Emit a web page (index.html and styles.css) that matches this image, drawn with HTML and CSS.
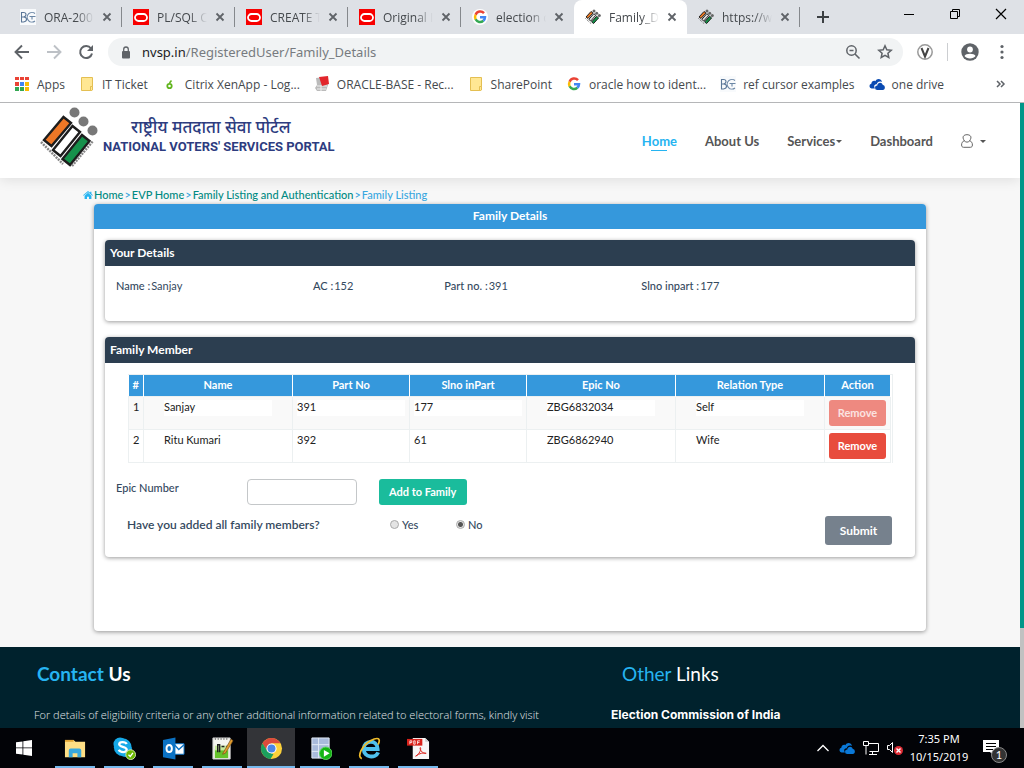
FILE: index.html
```html
<!DOCTYPE html>
<html lang="en">
<head>
<meta charset="utf-8">
<title>Family_Details</title>
<link rel="stylesheet" href="styles.css">
</head>
<body>
<svg class="defs" aria-hidden="true">
  <symbol id="i-bc" viewBox="0 0 16 16"><rect width="16" height="16" fill="#f8fafc"/><path d="M1.500 3v10M1 3.500h2.500q2.500 0 2.500 2T3.500 8H2M3.500 8q3 0 3 2.300T3.500 13H1" fill="none" stroke="#5b7798" stroke-width="1.100"/><path d="M15 4.500A4.800 4.800 0 1 0 15 12M9.500 7.500h6M12 7.500v3" fill="none" stroke="#6b86a5" stroke-width="1.100"/></symbol>
  <symbol id="i-oracle" viewBox="0 0 16 16"><rect width="16" height="16" fill="#f80000"/><rect x="2" y="5" width="12" height="7" rx="3.500" fill="none" stroke="#fff" stroke-width="1.800"/></symbol>
  <symbol id="i-google" viewBox="0 0 16 16"><circle cx="8" cy="8" r="8" fill="#fff"/><g fill="none" stroke-width="2.500"><path d="M12 4.200A5 5 0 0 0 3.600 5.700" stroke="#ea4335"/><path d="M3.600 5.700a5 5 0 0 0 0 4.600" stroke="#fbbc05"/><path d="M3.600 10.300a5 5 0 0 0 7.700 1.500" stroke="#34a853"/><path d="M11.300 11.800A5 5 0 0 0 13 8.200H8" stroke="#4285f4"/></g></symbol>
  <symbol id="i-eci" viewBox="0 0 16 16"><g fill="#666"><circle cx="9" cy="2" r="1.500"/><circle cx="11.700" cy="4.200" r="1.500"/><circle cx="14.300" cy="6.500" r="1.500"/></g><g stroke="#222" stroke-width="1"><path d="m6 2.500 2 1.600-5 5.300L1 8z" fill="#e87722"/><path d="m8.800 4.700 2 1.600-5 5.700-2-1.600z" fill="#ddd"/><path d="m11.600 7.300 2 1.600-5 5.600-2-1.600z" fill="#129347"/></g><path d="m.5 9.500 6 5.500" stroke="#555" stroke-dasharray="1 1"/></symbol>
  <symbol id="i-close" viewBox="0 0 10 10"><path d="m1.500 1.500 7 7m0-7-7 7" stroke="#5f6368" stroke-width="1.800"/></symbol>
  <symbol id="i-note" viewBox="0 0 14 16"><path d="M1.500 1.500h11v9h-1v4h-10z" fill="#ffe793" stroke="#e4bf52"/><path d="M10.500 14.500v-4h2v3.500l-1 .5z" fill="#ffe793" stroke="#e4bf52"/></symbol>
  <symbol id="i-cloud" viewBox="0 0 16 12"><path d="M6 10.500H2.500a2.400 2.400 0 0 1-.2-4.700C2.500 3 5 2.300 6.300 3.200 8-.4 12.500.6 13 4c-3-1.300-4.700.3-5.300 2.200C5 6 4.600 8.700 6 10.500z"/><path d="M8.300 12a2.300 2.300 0 0 1 0-4.600c.2-3.200 4.700-3.700 5.500-.5 2.800.2 2.700 5.100 0 5.100z"/></symbol>
</svg>

<header class="browser">
  <div class="tabs">
    <div class="tab"><svg class="fav"><use href="#i-bc"/></svg><span class="tab-title">ORA-200</span><button class="close" aria-label="Close tab"><svg><use href="#i-close"/></svg></button></div>
    <div class="tab"><svg class="fav"><use href="#i-oracle"/></svg><span class="tab-title">PL/SQL C</span><button class="close" aria-label="Close tab"><svg><use href="#i-close"/></svg></button></div>
    <div class="tab"><svg class="fav"><use href="#i-oracle"/></svg><span class="tab-title">CREATE T</span><button class="close" aria-label="Close tab"><svg><use href="#i-close"/></svg></button></div>
    <div class="tab"><svg class="fav"><use href="#i-oracle"/></svg><span class="tab-title">Original I</span><button class="close" aria-label="Close tab"><svg><use href="#i-close"/></svg></button></div>
    <div class="tab last"><svg class="fav"><use href="#i-google"/></svg><span class="tab-title">election c</span><button class="close" aria-label="Close tab"><svg><use href="#i-close"/></svg></button></div>
    <div class="tab active"><svg class="fav"><use href="#i-eci"/></svg><span class="tab-title">Family_D</span><button class="close" aria-label="Close tab"><svg><use href="#i-close"/></svg></button></div>
    <div class="tab"><svg class="fav"><use href="#i-eci"/></svg><span class="tab-title">https://w</span><button class="close" aria-label="Close tab"><svg><use href="#i-close"/></svg></button></div>
    <button class="new-tab" aria-label="New tab"><svg viewBox="0 0 12 12"><path d="M6 0v12M0 6h12" stroke="#3c4043" stroke-width="2"/></svg></button>
    <div class="window-buttons">
      <button aria-label="Minimize"><svg viewBox="0 0 12 12"><path d="M1 6.500h10" stroke="#000"/></svg></button>
      <button aria-label="Restore"><svg viewBox="0 0 12 12"><path d="M1.500 3.500h7v7h-7zM3.500 3.500v-2h7v7h-2" fill="none" stroke="#000"/></svg></button>
      <button aria-label="Close"><svg viewBox="0 0 12 12"><path d="m1 1 10 10m0-10L1 11" stroke="#000" stroke-width="1.200"/></svg></button>
    </div>
  </div>
  <div class="toolbar">
    <button aria-label="Back"><svg viewBox="0 0 16 16"><path d="M15 8H2M8 1.500 1.500 8 8 14.500" fill="none" stroke="#5f6368" stroke-width="1.900"/></svg></button>
    <button aria-label="Forward"><svg viewBox="0 0 16 16"><path d="M1 8h13M8 1.500 14.500 8 8 14.500" fill="none" stroke="#bdc1c6" stroke-width="1.900"/></svg></button>
    <button aria-label="Reload"><svg viewBox="0 0 16 16"><path d="M13 4.500A6 6 0 1 0 14 9.500" fill="none" stroke="#5f6368" stroke-width="2"/><path d="M15 1v6H9z" fill="#5f6368"/></svg></button>
    <div class="address">
      <svg class="lock" viewBox="0 0 10 13"><rect x="1" y="5" width="8" height="7.500" rx="1" fill="#5f6368"/><path d="M2.700 5.500V3.300a2.300 2.300 0 0 1 4.600 0v2.200" fill="none" stroke="#5f6368" stroke-width="1.300"/></svg>
      <span class="url">nvsp.in<span>/RegisteredUser/Family_Details</span></span>
      <button aria-label="Zoom"><svg viewBox="0 0 16 16"><circle cx="6.500" cy="6.500" r="4.700" fill="none" stroke="#5f6368" stroke-width="1.500"/><path d="m10 10 4.500 4.500M4.500 6.500h4" stroke="#5f6368" stroke-width="1.600"/></svg></button>
      <button aria-label="Bookmark"><svg viewBox="0 0 16 16"><path d="m8 1.800 1.800 4 4.400.5-3.300 2.900.9 4.300L8 11.300l-3.800 2.200.9-4.300-3.300-2.900 4.400-.5z" fill="none" stroke="#5f6368" stroke-width="1.500"/></svg></button>
    </div>
    <button class="ext" aria-label="Extension"><svg viewBox="0 0 16 16"><circle cx="8" cy="8" r="7.200" fill="#fff" stroke="#999" stroke-width="1.500"/><path d="m4.500 4 3.500 8.500L11.500 4" fill="none" stroke="#444" stroke-width="2"/></svg></button>
    <button class="profile" aria-label="Profile"><svg viewBox="0 0 18 18"><circle cx="9" cy="9" r="8.700" fill="#5f6368"/><circle cx="9" cy="6.500" r="2.900" fill="#fff"/><path d="M3.500 13c1-3 10-3 11 0-2 3.300-9 3.300-11 0z" fill="#fff"/></svg></button>
    <button class="menu" aria-label="Menu"><svg viewBox="0 0 16 16" fill="#5f6368"><circle cx="8" cy="2.500" r="1.600"/><circle cx="8" cy="8" r="1.600"/><circle cx="8" cy="13.500" r="1.600"/></svg></button>
  </div>
  <nav class="bookmarks" aria-label="Bookmarks">
    <a href="#"><svg viewBox="0 0 16 16"><path d="M1 1h4v3H1zM6 1h4v3H6zM11 1h4v3h-4zM1 6h4v4H1z" fill="#ea4335"/><path d="M6 6h4v4H6z" fill="#4285f4"/><path d="M11 6h4v4h-4zM11 11h4v4h-4z" fill="#fbbc05"/><path d="M1 11h4v4H1zM6 11h4v4H6z" fill="#34a853"/></svg>Apps</a>
    <a href="#"><svg><use href="#i-note"/></svg>IT Ticket</a>
    <a href="#"><svg viewBox="0 0 16 16"><circle cx="7.500" cy="10" r="2.200" fill="none" stroke="#62b51e" stroke-width="1.800"/><path d="m7.500 7 2-2.500" stroke="#62b51e" stroke-width="1.600"/></svg>Citrix XenApp - Log...</a>
    <a href="#"><svg viewBox="0 0 16 16"><path d="m2 2 9-1 3 8-2 6H3L1 12l2-3z" fill="#bbb"/><path d="M3 10h10M3 13h9M7 9v6" stroke="#eee"/><path d="m5 1 9-1 1 8-7 2z" fill="#e2262c"/></svg>ORACLE-BASE - Rec...</a>
    <a href="#"><svg><use href="#i-note"/></svg>SharePoint</a>
    <a href="#"><svg><use href="#i-google"/></svg>oracle how to ident...</a>
    <a href="#"><svg><use href="#i-bc"/></svg>ref cursor examples</a>
    <a href="#" class="bm-drive"><svg fill="#094ab2"><use href="#i-cloud"/></svg>one drive</a>
    <button class="more" aria-label="More bookmarks"><svg viewBox="0 0 10 8"><path d="m1 1 3 3-3 3m4-6 3 3-3 3" fill="none" stroke="#5f6368" stroke-width="1.500"/></svg></button>
  </nav>
</header>

<div class="viewport">
  <div class="page">
    <header class="site-header">
      <a href="#" class="brand">
        <svg viewBox="0 0 58 60"><g fill="#787878"><circle cx="34.500" cy="5.500" r="5"/><circle cx="43.500" cy="14.500" r="5"/><circle cx="52.500" cy="23.500" r="5"/></g><g stroke="#1d1d1d" stroke-width="2.400"><path d="m23.500 10 7.500 6L11.500 39 4 33z" fill="#ee7726"/><path d="m32.500 19 7.500 6-19.500 24-7.500-6z" fill="#fff"/><path d="m42 28 7.500 6L30 58l-7.500-6z" fill="#16914b"/></g><path d="M1 35 23 57M32 59 53 34" stroke="#888" stroke-width="2.500" stroke-dasharray="2 1"/></svg>
        <span class="brand-text"><span lang="hi" class="hindi">राष्ट्रीय मतदाता सेवा पोर्टल</span><span class="english">NATIONAL VOTERS' SERVICES PORTAL</span></span>
      </a>
      <nav class="site-nav" aria-label="Main">
        <a href="#" class="current">Home</a>
        <a href="#">About Us</a>
        <a href="#" class="caret">Services</a>
        <a href="#">Dashboard</a>
        <a href="#" class="caret user" aria-label="Account"><svg viewBox="0 0 12 14"><path d="M3.500 7C.3 2.500 3 .7 6 .7S11.700 2.500 8.500 7C10.500 7 11.500 9 11.400 11c0 1.500-.7 2.300-2 2.300H2.600c-1.300 0-2-.8-2-2.300C.5 9 1.500 7 3.500 7c1.500 1.500 3.500 1.500 5 0" fill="none" stroke="#666"/></svg></a>
      </nav>
    </header>

    <nav class="crumbs" aria-label="Breadcrumb">
      <svg viewBox="0 0 11 10" fill="#26b4f1"><path d="M5.500 2 1.700 5.200V9h2.700V6.500h2.200V9h2.700V5.200zM5.500 0 0 4.600l.6.700 4.900-4 4.900 4 .6-.7L9.300 3V.8H7.900v1.100z"/></svg>
      <a href="#">Home</a> &gt; <a href="#">EVP Home</a> &gt; <a href="#">Family Listing and Authentication</a> &gt; <span>Family Listing</span>
    </nav>

    <main class="card">
      <h1>Family Details</h1>
      <section class="panel details">
        <h2>Your Details</h2>
        <div class="grid">
          <div class="span3"><b>Name :</b><span>Sanjay</span></div>
          <div class="span2"><b>AC :</b><span>152</span></div>
          <div class="span3"><b>Part no. :</b><span>391</span></div>
          <div class="span4"><b>Slno inpart :</b><span>177</span></div>
        </div>
      </section>
      <section class="panel members">
        <h2>Family Member</h2>
        <div class="table-wrap">
          <table>
            <colgroup><col class="c-num"><col class="c-wide"><col class="c-mid"><col class="c-mid"><col class="c-wide"><col class="c-wide"><col class="c-act"></colgroup>
            <thead><tr><th>#</th><th>Name</th><th>Part No</th><th>Slno inPart</th><th>Epic No</th><th>Relation Type</th><th>Action</th></tr></thead>
            <tbody>
              <tr><td>1</td><td class="inset"><span>Sanjay</span></td><td><span>391</span></td><td><span>177</span></td><td class="inset"><span>ZBG6832034</span></td><td class="inset"><span>Self</span></td><td><button class="btn remove" disabled>Remove</button></td></tr>
              <tr><td>2</td><td class="inset"><span>Ritu Kumari</span></td><td><span>392</span></td><td><span>61</span></td><td class="inset"><span>ZBG6862940</span></td><td class="inset"><span>Wife</span></td><td><button class="btn remove">Remove</button></td></tr>
            </tbody>
          </table>
        </div>
        <form class="grid epic">
          <label class="span2" for="epic">Epic Number</label>
          <div class="span2"><input type="text" id="epic"></div>
          <div class="span4"><button type="button" class="btn add">Add to Family</button></div>
        </form>
        <div class="grid confirm">
          <span class="question">Have you added all family members?</span>
          <label class="choice"><input type="radio" name="all" value="yes">Yes</label>
          <label class="choice"><input type="radio" name="all" value="no" checked>No</label>
          <div class="submit-cell"><button type="button" class="btn submit">Submit</button></div>
        </div>
      </section>
    </main>

    <footer class="site-footer">
      <section><h3><strong><em>Contact</em> Us</strong></h3><p>For details of eligibility criteria or any other additional information related to electoral forms, kindly visit</p></section>
      <section><h3><em>Other</em> Links</h3><p><a href="#">Election Commission of India</a></p></section>
    </footer>
  </div>
  <div class="scrollbar"><div class="thumb"></div></div>
</div>

<footer class="taskbar">
  <button class="start" aria-label="Start"><svg viewBox="0 0 16 16" fill="#fff"><path d="M0 2.300 6.500 1.400v6.100H0zM7.300 1.300 16 0v7.500H7.300zM0 8.300h6.500v6.300L0 13.700zM7.300 8.300H16V16l-8.700-1.300z"/></svg></button>
  <div class="apps">
    <button aria-label="File Explorer"><svg viewBox="0 0 24 24"><path d="M1 3h9l2 2h10v16H1z" fill="#ffdf85"/><path d="M1 3h9v2H1z" fill="#e3a735"/><path d="M5 21v-7q0-2 2-2h9q2 0 2 2v7h-4v-4H9v4z" fill="#39a9df"/></svg></button>
    <button aria-label="Skype"><svg viewBox="0 0 26 26"><circle cx="8" cy="8" r="7.500" fill="#16a9e8"/><circle cx="14" cy="15" r="7.500" fill="#16a9e8"/><circle cx="11" cy="11.500" r="10" fill="#16a9e8"/><path d="M15.500 8C14 5 7 4.800 7 8.300s8.500 2 8.500 6S8 17.500 6.500 14.500" fill="none" stroke="#fff" stroke-width="2.600"/><circle cx="20" cy="20" r="5.500" fill="#6bb700" stroke="#d6edb5"/><path d="m17.500 20 2 2 3-4" fill="none" stroke="#fff" stroke-width="1.500"/></svg></button>
    <button aria-label="Outlook"><svg viewBox="0 0 24 24"><path d="M13 7h10v11H13z" fill="#fff" stroke="#0b72c4"/><path d="m13 8 4.500 5L23 8" fill="none" stroke="#0b72c4" stroke-width="1.500"/><path d="m1 3 13-2.500v23L1 21z" fill="#0b72c4"/><ellipse cx="7.500" cy="12" rx="2.800" ry="3.700" fill="none" stroke="#fff" stroke-width="2"/></svg></button>
    <button aria-label="Notepad++"><svg viewBox="0 0 24 24"><path d="M2 1h18v22H2z" fill="#f5f5ef" stroke="#ccc"/><path d="M4 13h14v9H4z" fill="#65c32a"/><path d="M4 9h14v5H4z" fill="#c6e99a"/><path d="M7 16V8h2v8M11 10h3m2 0h2" fill="none" stroke="#222" stroke-width="1.500"/><path d="m13 16 8-14 2 2-8 13-3 1z" fill="#e29b2d" stroke="#76501a" stroke-width=".7"/><path d="M4 2h13" stroke="#777" stroke-width="2" stroke-dasharray="1 2"/></svg></button>
    <button class="running" aria-label="Chrome"><svg viewBox="0 0 24 24"><circle cx="12" cy="12" r="11" fill="#fbd13b"/><path d="M2.500 6.500a11 11 0 0 1 19 0H12L7.500 15z" fill="#dc4b3d"/><path d="M2.500 6.500 8 15l6 3-3 5A11 11 0 0 1 2.500 6.500z" fill="#1ba05e"/><circle cx="12" cy="12" r="5.300" fill="#fff"/><circle cx="12" cy="12" r="4.200" fill="#4a86e8"/></svg></button>
    <button aria-label="SQL Developer"><svg viewBox="0 0 24 24"><path d="M3 1h18v21H3z" fill="#a9bbdc" stroke="#e4ebf7"/><path d="M3 8h18M3 15h18M10 1v21" stroke="#e4ebf7"/><circle cx="17.500" cy="17" r="6.500" fill="#14b514" stroke="#5ed65e"/><path d="m15.500 13.500 6 3.500-6 3.500z" fill="#fff"/></svg></button>
    <button aria-label="Internet Explorer"><svg viewBox="0 0 24 24"><path d="M21 16c-2.500 6.500-15 6-15-3.500S20 2 20.500 12.500H7" fill="none" stroke="#4fc1ee" stroke-width="4"/><path d="M4 22.500C-1.500 21 4 9 13 4c8-4.500 11-2.500 8 4" fill="none" stroke="#f0bd2b" stroke-width="1.800"/></svg></button>
    <button aria-label="PDF reader"><svg viewBox="0 0 24 24"><path d="M6 1h13l4 4v18H6z" fill="#f6f6f6"/><path d="M19 1v4h4" fill="#ccc"/><path d="M0 2h16v7H0z" fill="#d9221b"/><path d="M3 7.500V4h2v1.800H3M7 4v3.500h1.500V4zM11 7.500V4h2.500M11 5.700h2" fill="none" stroke="#fff" stroke-width=".8"/><path d="M9 20c4-2 6-7 5-9-1.500 1 2 7 6 6-3-1-7 0-11 3z" fill="none" stroke="#d9221b"/></svg></button>
  </div>
  <div class="tray">
    <svg class="chev" viewBox="0 0 12 8"><path d="m.5 7 5.500-5.500L11.500 7" fill="none" stroke="#fff" stroke-width="1.300"/></svg>
    <svg class="onedrive" fill="#0a78d7"><use href="#i-cloud"/></svg>
    <svg class="net" viewBox="0 0 16 14"><path d="M5.500 2.500h10v8h-9M9.500 11v2M6 13.500h8M.5.500h5v4h-5zM3 4.500v9" fill="none" stroke="#fff"/></svg>
    <svg class="sound" viewBox="0 0 16 14"><path d="M.5 4.500h2l3-3v10l-3-3h-2z" fill="none" stroke="#fff"/><circle cx="11.500" cy="9.500" r="4.500" fill="#dd2c34"/><path d="m9.500 7.500 4 4m0-4-4 4" stroke="#fff" stroke-width="1.400"/></svg>
    <time class="clock"><span>7:35 PM</span><span>10/15/2019</span></time>
    <button class="notify" aria-label="Notifications"><svg viewBox="0 0 16 16"><path d="M0 0h16v12h-5v4l-4-4H0z" fill="#fff"/><path d="M3 3.500h10M3 6.500h10M3 9.500h7" stroke="#000"/></svg><span class="badge">1</span></button>
  </div>
</footer>
</body>
</html>
```

FILE: styles.css
```css
* { box-sizing: border-box; }
body { margin: 0; height: 100vh; display: flex; flex-direction: column; overflow: hidden; font-family: Lato, "Liberation Sans", sans-serif; font-size: 11px; }
button { border: 0; background: none; padding: 0; font-family: inherit; display: flex; align-items: center; justify-content: center; flex: none; }
a { text-decoration: none; color: inherit; }
svg { flex: none; display: block; }
h1, h2, h3, p { margin: 0; }
.defs { position: absolute; width: 0; height: 0; }

/* Browser frame */
.browser { flex: none; background: #fff; border-bottom: 1px solid #b5b6b8; font-family: "Open Sans", "Noto Sans", sans-serif; font-size: 12px; color: #45494d; }
.tabs { height: 34px; background: #dee1e6; display: flex; align-items: stretch; padding-left: 9px; }
.tab { width: 113px; display: flex; align-items: center; gap: 8px; padding: 0 10px 0 11px; position: relative; }
.tab::after { content: ""; position: absolute; right: 0; top: 7px; width: 1px; height: 20px; background: #85888c; }
.tab.last::after, .tab.active::after { display: none; }
.tab.active { background: #fff; border-radius: 8px 8px 0 0; }
.fav { width: 16px; height: 16px; }
.tab-title { flex: 1; min-width: 0; white-space: nowrap; -webkit-mask-image: linear-gradient(to right, #000 65%, transparent); mask-image: linear-gradient(to right, #000 65%, transparent); }
.close, .close svg { width: 10px; height: 10px; }
.new-tab { width: 46px; }
.new-tab svg { width: 12px; height: 12px; }
.window-buttons { margin-left: auto; display: flex; height: 28px; }
.window-buttons button { width: 46px; }
.window-buttons svg { width: 12px; height: 12px; }
.toolbar { height: 36px; display: flex; align-items: center; padding: 0 12px 0 6px; }
.toolbar > button { width: 32px; }
.toolbar svg { width: 16px; height: 16px; }
.address { flex: 1; height: 28px; margin: 0 6px; border-radius: 14px; background: #f1f3f4; display: flex; align-items: center; padding: 0 2px 0 13px; font-family: "Noto Sans", sans-serif; font-size: 13px; color: #202124; }
.address .lock { width: 10px; height: 13px; }
.url { flex: 1; padding-left: 11px; }
.url span { color: #777b80; }
.address button { width: 32px; }
.toolbar .profile { height: 18px; width: 45px; border-left: 1px solid #ccced1; margin-left: 6px; }
.toolbar .profile svg { width: 18px; height: 18px; }
.toolbar > .menu { width: 20px; }
.bookmarks { height: 32px; display: flex; align-items: center; gap: 14px; padding: 0 18px 4px 14px; white-space: nowrap; }
.bookmarks a { display: flex; align-items: center; gap: 7px; }
.bookmarks a svg { width: 16px; height: 16px; }
.bookmarks .bm-drive svg { height: 12px; }
.more { margin-left: auto; }
.more svg { width: 10px; height: 8px; }

/* Page */
.viewport { flex: 1; min-height: 0; display: flex; background: #f7f7f7; }
.page { flex: 1; min-width: 0; overflow: hidden; }
.scrollbar { width: 4px; background: #c1c1c1; }
.thumb { height: 84%; background: #009688; }
.site-header { height: 75px; background: #fff; box-shadow: 0 2px 12px rgba(0,0,0,.1); display: flex; align-items: center; justify-content: space-between; padding: 0 34px 0 40px; }
.brand { display: flex; align-items: center; gap: 5px; color: #2d3c80; padding-bottom: 7px; }
.brand svg { width: 58px; height: 60px; }
.brand-text { display: flex; flex-direction: column; }
.hindi { font-family: "Noto Sans Devanagari", "Noto Sans", sans-serif; font-size: 17px; line-height: 20px; font-weight: 500; text-align: center; padding-right: 16px; }
.english { font-family: Roboto, sans-serif; font-size: 13px; line-height: 16px; font-weight: 700; }
.site-nav { display: flex; align-items: center; gap: 28px; font-size: 13px; font-weight: 700; color: #555; }
.site-nav a { display: flex; align-items: center; position: relative; line-height: 20px; }
.site-nav .current { color: #26b4f1; }
.current::after { content: ""; position: absolute; left: 9px; bottom: 0; width: 16px; height: 1px; background: #26b4f1; }
.caret::after { content: ""; border: 3px solid transparent; border-top-color: #555; border-bottom: 0; margin: 2px 0 0 1px; }
.user svg { width: 12px; height: 14px; }
.user::after { margin-left: 7px; }
.crumbs { display: flex; align-items: center; gap: 1px; height: 26px; padding: 8px 0 0 83px; font-size: 11px; font-weight: 500; line-height: 18px; color: #3aa7df; white-space: nowrap; }
.crumbs svg { width: 10px; height: 9px; }
.crumbs a { color: #008a82; }

.card { margin: 0 94px; min-height: 427px; background: #fff; border-radius: 4px; box-shadow: 0 1px 4px rgba(0,0,0,.4); overflow: hidden; color: #34495e; }
.card h1 { background: #3598dc; color: #fff; text-align: center; font-size: 12px; line-height: 24px; padding-bottom: 1px; font-weight: 700; }
.panel { margin: 11px 11px 16px; border-radius: 4px; background: #fff; box-shadow: 0 1px 4px rgba(0,0,0,.4); }
.panel h2 { background: #2c3e50; color: #fff; border-radius: 4px 4px 0 0; padding-left: 5px; font-size: 12px; line-height: 26px; font-weight: 700; }
.grid { display: grid; grid-template-columns: repeat(12, minmax(0, 1fr)); padding: 0 11px; }
.span2 { grid-column: span 2; }
.span3 { grid-column: span 3; }
.span4 { grid-column: span 4; }
.details { height: 81px; }
.details .grid { padding-top: 12px; line-height: 16px; }
.details .grid div { display: flex; gap: 1px; }
.details b { font-weight: 500; }
.members { height: 220px; }
.table-wrap { margin: 11px 22px 0 23px; border: 1px solid #ecf0f1; border-left: 0; border-bottom: 0; padding-right: 1px; }
table { width: 100%; table-layout: fixed; border-collapse: collapse; color: #222; }
.c-num { width: 15px; }
.c-mid { width: 117px; }
.c-act { width: 66px; }
th { background: #3598dc; color: #fff; height: 21px; padding: 0 0 1px; border-right: 1px solid #fff; font-size: 11px; font-weight: 700; }
td { height: 33px; padding: 3px 4px; vertical-align: top; border: 1px solid #ecf0f1; line-height: 14px; }
td:first-child { padding-right: 0; }
td span { display: block; width: 108px; max-width: 100%; background: #fff; padding-bottom: 2px; }
td.inset { padding-left: 20px; }
tbody tr:first-child td { background: #f9f9f9; }
.btn { color: #fff; font-weight: 700; border-radius: 3px; height: 26px; font-size: 11px; }
.remove { width: 57px; background: #e84c3d; }
.remove:disabled { background: #ee8980; color: #fbe3e1; }
.epic { padding-top: 16px; line-height: 18px; }
.epic label, .choice { font-weight: 500; }
.epic input { width: calc(100% - 22px); height: 26px; border: 1px solid #c4c7c9; border-radius: 4px; display: block; padding: 0 6px; }
.add { width: 88px; background: #1abc9c; }
.confirm { padding: 11px 23px 0 11px; grid-template-columns: 263px 66px 66px 1fr; line-height: 18px; }
.question { padding-left: 11px; font-size: 12px; font-weight: 600; }
.choice { display: flex; align-items: center; gap: 3px; height: 18px; padding-left: 11px; }
.choice input { appearance: none; width: 9px; height: 9px; margin: 0; border: 1px solid #aaa; border-radius: 50%; background: #e4e4e4; }
.choice input:checked { background: radial-gradient(circle, #555 0 2px, #e4e4e4 3px); }
.submit-cell { display: flex; justify-content: flex-end; }
.submit { width: 67px; height: 29px; background: #76818d; font-size: 12px; }

.site-footer { margin-top: 16px; background: #00222d; min-height: 120px; padding: 15px 34px 0; display: grid; grid-template-columns: 577fr 375fr; color: #e2e6e8; }
.site-footer h3 { font-size: 19px; line-height: 24px; font-weight: 400; color: #fff; padding-left: 3px; }
.site-footer section + section h3 { padding-left: 11px; }
.site-footer h3 em { font-style: normal; color: #26b4f1; }
.site-footer p { font-family: "Open Sans", sans-serif; font-size: 11px; font-weight: 300; line-height: 16px; margin-top: 21px; white-space: nowrap; }
.site-footer p a { font-family: Inter, sans-serif; font-size: 12px; font-weight: 700; color: #fff; }

/* Taskbar */
.taskbar { flex: none; height: 40px; background: #020307; display: flex; color: #fff; }
.start { width: 48px; margin-right: 3px; }
.start svg { width: 16px; height: 16px; }
.apps { display: flex; gap: 1px; }
.apps button { width: 48px; position: relative; }
.apps svg { width: 23px; height: 23px; }
.apps button::after { content: ""; position: absolute; left: 4px; right: 4px; bottom: 0; height: 2px; background: #76b9ed; }
.apps .running { background: #333438; }
.apps .running::after { left: 0; right: 0; }
.tray { margin-left: auto; display: flex; align-items: center; padding-right: 17px; }
.chev { width: 12px; height: 8px; }
.onedrive { width: 16px; height: 12px; margin-left: 10px; }
.net { width: 16px; height: 14px; margin-left: 8px; }
.sound { width: 16px; height: 14px; margin-left: 8px; }
.clock { display: flex; flex-direction: column; align-items: center; width: 58px; margin: 0 15px 0 7px; font: 11px/18px "Noto Sans", sans-serif; }
.notify { position: relative; width: 24px; height: 40px; justify-content: flex-start; color: #fff; }
.notify svg { width: 16px; height: 16px; }
.badge { position: absolute; left: 8px; top: 19px; width: 16px; height: 16px; border: 1px solid #888; border-radius: 50%; background: #333; font-size: 11px; line-height: 14px; }
```
